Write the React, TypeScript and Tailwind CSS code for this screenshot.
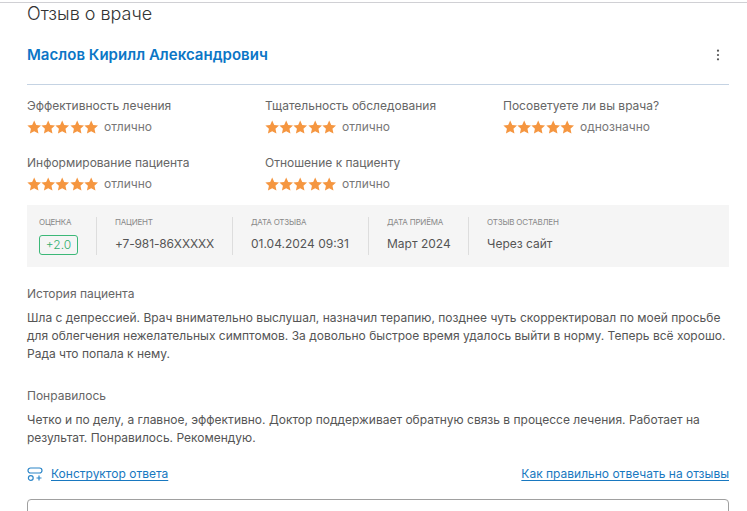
const font = { fontFamily: 'Inter, "Noto Sans", sans-serif' };

function Stars() {
  return (
    <div className="-ml-[0.5px] mr-[0.5px] flex w-[71px] shrink-0">
      {[0, 1, 2, 3, 4].map((i) => (
        <svg key={i} viewBox="0 0 24 24" className="h-[14px] w-[14.4px] shrink-0" fill="#f59640">
          <path d="M12 .8l3.5 7.6 8.2 1-6.1 5.6 1.7 8.2L12 19.1l-7.3 4.1 1.7-8.2L.3 9.4l8.2-1z" />
        </svg>
      ))}
    </div>
  );
}

function Rating({ label, value }: { label: string; value: string }) {
  return (
    <div className="h-[40px] pt-px">
      <div className="h-[18px] text-[12px] leading-[18px] text-[#666]">{label}</div>
      <div className="mt-[3px] flex h-[18px] items-center gap-[6px]">
        <Stars />
        <span className="text-[12px] text-[#777]">{value}</span>
      </div>
    </div>
  );
}

function Info({ label, width, children }: { label: string; width: string; children: React.ReactNode }) {
  return (
    <div className={`${width} -mt-[3px] shrink-0`}>
      <div className="h-[12px] text-[8px] leading-[12px] tracking-[-0.2px] text-[#888]">{label}</div>
      <div className="mt-[7px] flex h-[19px] items-center text-[12px] text-[#555]">{children}</div>
    </div>
  );
}

function Sep() {
  return <div className="mr-[18px] h-[38px] w-px shrink-0 bg-[#dddddd]" />;
}

export default function App() {
  return (
    <div className="h-[511px] w-[747px] overflow-hidden bg-white" style={font}>
      <div className="h-[2px] bg-white" />
      <div className="h-px bg-[#d0d0d4]" />
      <div className="pl-[27px] pr-[18px]">
        <h1 className="h-[22px] text-[18px] font-light leading-[22px] text-[#333]">Отзыв о враче</h1>

        <div className="mt-[19px] flex h-[22px] items-center justify-between pr-[9px]">
          <a className="text-[15px] font-semibold tracking-[0.03px] text-[#0b76c6]">Маслов Кирилл Александрович</a>
          <svg viewBox="0 0 4 14" className="h-[12px] w-[4px]" fill="#555">
            <circle cx="2" cy="2" r="1.3" />
            <circle cx="2" cy="7" r="1.3" />
            <circle cx="2" cy="12" r="1.3" />
          </svg>
        </div>

        <div className="mt-[18px] h-px w-[702px] bg-[#c5d3e3]" />

        <div className="mt-[11px] grid w-[714px] grid-cols-3 gap-y-[17px]">
          <Rating label="Эффективность лечения" value="отлично" />
          <Rating label="Тщательность обследования" value="отлично" />
          <Rating label="Посоветуете ли вы врача?" value="однозначно" />
          <Rating label="Информирование пациента" value="отлично" />
          <Rating label="Отношение к пациенту" value="отлично" />
        </div>

        <div className="mt-[12px] flex h-[62px] w-[702px] items-center bg-[#f5f5f5] pl-[12px]">
          <Info label="ОЦЕНКА" width="w-[57px]">
            <span className="mt-[2px] flex h-[20px] w-[39px] items-center justify-center rounded-[3px] border border-[#3cb878] text-[12px] font-light text-[#2fae6e]">
              +2.0
            </span>
          </Info>
          <Sep />
          <Info label="ПАЦИЕНТ" width="w-[117px]">
            <span className="tracking-[-0.14px]">+7-981-86XXXXX</span>
          </Info>
          <Sep />
          <Info label="ДАТА ОТЗЫВА" width="w-[117px]">01.04.2024 09:31</Info>
          <Sep />
          <Info label="ДАТА ПРИЁМА" width="w-[81px]">Март 2024</Info>
          <Sep />
          <Info label="ОТЗЫВ ОСТАВЛЕН" width="w-[100px]">Через сайт</Info>
        </div>

        <section className="mt-[18px] w-[702px] text-[12px] leading-[18px] text-[#555]">
          <div className="text-[#666]">История пациента</div>
          <p className="mt-[6px]">
            Шла с депрессией. Врач внимательно выслушал, назначил терапию, позднее чуть скорректировал по моей просьбе
            для облегчения нежелательных симптомов. За довольно быстрое время удалось выйти в норму. Теперь всё хорошо.
            Рада что попала к нему.
          </p>
        </section>

        <section className="mt-[24px] w-[702px] text-[12px] leading-[18px] text-[#555]">
          <div className="text-[#666]">Понравилось</div>
          <p className="mt-[6px]">
            Четко и по делу, а главное, эффективно. Доктор поддерживает обратную связь в процессе лечения. Работает на
            результат. Понравилось. Рекомендую.
          </p>
        </section>

        <div className="mt-[18px] flex h-[18px] w-[702px] items-center justify-between text-[12px] text-[#1878c0]">
          <a className="flex items-center gap-[8px] underline underline-offset-2">
            <svg viewBox="0 0 16 16" className="h-[16px] w-[16px]" fill="none" stroke="#2c86c8" strokeWidth="1.2">
              <rect x="1" y="2" width="14" height="5" rx="2.5" />
              <circle cx="3.8" cy="12" r="2.4" />
              <path d="M9.5 12h5M12 9.5v5" />
            </svg>
            Конструктор ответа
          </a>
          <a className="underline underline-offset-2">Как правильно отвечать на отзывы</a>
        </div>

        <div className="mt-[16px] h-[40px] w-[702px] rounded-[4px] border border-[#a0a0a0]" />
      </div>
    </div>
  );
}
